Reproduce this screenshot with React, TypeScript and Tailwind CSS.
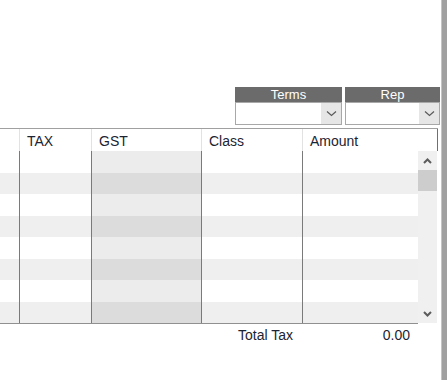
import React from "react"

const rows = [0, 1, 2, 3, 4, 5, 6, 7]
const rowH = ["h-[22px]", "h-[21px]"]

function ComboChevron() {
    return (
        <svg width="11" height="7" viewBox="0 0 11 7" className="text-[#5a5a5a]">
            <path d="M1 1.5 L5.5 5.5 L10 1.5" fill="none" stroke="currentColor" strokeWidth="1.2" />
        </svg>
    )
}

function ScrollChevron({ up }: { up?: boolean }) {
    return (
        <svg width="9" height="6" viewBox="0 0 9 6" className="text-[#5c5c5c]">
            <path d={up ? "M1 5 L4.5 1.5 L8 5" : "M1 1 L4.5 4.5 L8 1"} fill="none" stroke="currentColor" strokeWidth="2" />
        </svg>
    )
}

function Combo({ label, width }: { label: string, width: string }) {
    return (
        <div className={`flex flex-col ${width}`}>
            <div className="h-[15px] bg-[#6b6b6b] text-white text-[13px] leading-[15px] text-center">{label}</div>
            <div className="h-[23px] border border-[#a8a8a8] bg-white flex justify-end">
                <div className="w-[20px] bg-[#e6e6e6] flex items-center justify-center">
                    <ComboChevron />
                </div>
            </div>
        </div>
    )
}

function BodyColumn({ width, shade, border }: { width: string, shade?: boolean, border?: boolean }) {
    return (
        <div className={`flex flex-col ${width} ${border ? "border-l border-[#7a7a7a]" : ""}`}>
            {rows.map((r) => (
                <div
                    key={r}
                    className={`${rowH[r % 2]} ${shade
                        ? (r % 2 === 0 ? "bg-[#ececec]" : "bg-[#dcdcdc]")
                        : (r % 2 === 0 ? "bg-white" : "bg-[#efefef]")}`}
                />
            ))}
        </div>
    )
}

export default function App() {
    return (
        <div className="w-[447px] h-[380px] bg-white flex overflow-hidden text-[#1c2433]" style={{ fontFamily: '"Liberation Sans", Arial, sans-serif' }}>
            <div className="w-[441px] flex flex-col">
                <div className="h-[87px]" />

                <div className="flex justify-end gap-[3px] pr-[1px]">
                    <Combo label="Terms" width="w-[107px]" />
                    <Combo label="Rep" width="w-[95px]" />
                </div>

                <div className="mt-[3px] w-[438px] border-t border-[#a0a0a0]">
                    <div className="flex h-[22px] text-[14px] leading-[22px] border-r border-[#707070]">
                        <div className="w-[19px]" />
                        <div className="w-[72px] border-l border-[#e2e2e2] pl-[7px] pt-[1px]">TAX</div>
                        <div className="w-[110px] border-l border-[#e2e2e2] pl-[7px] pt-[1px]">GST</div>
                        <div className="w-[101px] border-l border-[#e2e2e2] pl-[7px] pt-[1px]">Class</div>
                        <div className="w-[134px] border-l border-[#e2e2e2] pl-[7px] pt-[1px]">Amount</div>
                    </div>

                    <div className="flex">
                        <div className="flex border-b border-[#909090]">
                            <BodyColumn width="w-[19px]" />
                            <BodyColumn width="w-[72px]" border />
                            <BodyColumn width="w-[110px]" shade border />
                            <BodyColumn width="w-[101px]" border />
                            <BodyColumn width="w-[116px]" border />
                        </div>
                        <div className="w-[19px] h-[172px] bg-[#f0f0f0] flex flex-col">
                            <div className="h-[19px] flex items-center justify-center">
                                <ScrollChevron up />
                            </div>
                            <div className="h-[21px] bg-[#cdcdcd]" />
                            <div className="flex-1" />
                            <div className="h-[19px] flex items-center justify-center">
                                <ScrollChevron />
                            </div>
                        </div>
                    </div>
                </div>

                <div className="flex h-[22px] items-center text-[14px]">
                    <span className="ml-[238px]">Total Tax</span>
                    <span className="ml-auto mr-[31px]">0.00</span>
                </div>
            </div>
            <div className="w-[6px] bg-[#a0a0a0] border-l border-[#c4c4c4]" />
        </div>
    )
}
